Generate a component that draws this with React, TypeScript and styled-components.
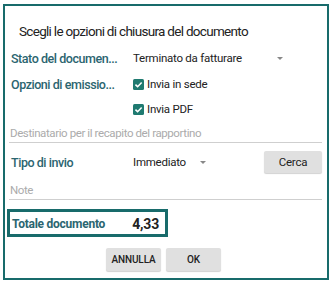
import styled, { createGlobalStyle } from 'styled-components';

const GlobalStyle = createGlobalStyle`
    html, body {
        margin: 0;
        padding: 0;
        background: #ffffff;
        font-family: Roboto, "Liberation Sans", sans-serif;
    }
`;

const teal = '#186b6b';
const labelColor = '#2b6570';

const Page = styled.div`
    width: 335px;
    height: 285px;
    padding: 4px 0 0 3px;
    box-sizing: border-box;
`;

const Dialog = styled.div`
    width: 326px;
    height: 276px;
    box-sizing: border-box;
    border: 2px solid ${teal};
    padding: 0 5px 0 4px;
    display: flex;
    flex-direction: column;
`;

const Title = styled.h2`
    margin: 0;
    padding: 17px 0 0 10px;
    height: 39px;
    box-sizing: border-box;
    font-size: 13.5px;
    font-weight: 400;
    letter-spacing: -0.7px;
    color: #222;
    line-height: 16px;
    white-space: nowrap;
`;

const Row = styled.div<{ $h: number }>`
    display: flex;
    align-items: center;
    height: ${(p) => p.$h}px;
`;

const Label = styled.div`
    width: 124px;
    flex: none;
    padding-left: 2px;
    box-sizing: border-box;
    font-size: 12.5px;
    font-weight: 500;
    letter-spacing: -0.45px;
    color: ${labelColor};
    white-space: nowrap;
`;

const Select = styled.div<{ $w: number }>`
    width: ${(p) => p.$w}px;
    display: flex;
    align-items: center;
    justify-content: space-between;
    font-size: 11.5px;
    letter-spacing: -0.25px;
    color: #222;
`;

const Caret = styled.span`
    width: 0;
    height: 0;
    border-left: 3px solid transparent;
    border-right: 3px solid transparent;
    border-top: 3px solid #888;
`;

const Check = styled.label`
    display: flex;
    align-items: center;
    gap: 3px;
    font-size: 11.5px;
    letter-spacing: -0.25px;
    color: #222;
`;

const Box = styled.span`
    width: 11px;
    height: 11px;
    border-radius: 1.5px;
    background: #1f7a70;
    display: flex;
    align-items: center;
    justify-content: center;
`;

const Field = styled.div<{ $top: number }>`
    border-bottom: 1px solid #cfcfcf;
    font-size: 11.5px;
    letter-spacing: -0.4px;
    line-height: 14px;
    color: #ababab;
    padding: ${(p) => p.$top}px 0 2px 1px;
`;

const GreyButton = styled.button<{ $w: number }>`
    width: ${(p) => p.$w}px;
    height: 22px;
    border: none;
    border-radius: 2px;
    background: #e0e0e0;
    box-shadow: 0 1px 1px rgba(0, 0, 0, 0.18);
    font-family: inherit;
    font-size: 11.5px;
    letter-spacing: -0.2px;
    color: #222;
    padding: 0;
`;

const Spacer = styled.div`
    flex: 1;
`;

const Total = styled.div`
    margin: 9px 0 0 -2px;
    width: 161px;
    height: 28px;
    box-sizing: border-box;
    border: 3px solid ${teal};
    display: flex;
    align-items: center;
    justify-content: space-between;
    padding: 1px 6px 0 2px;
`;

const TotalLabel = styled.span`
    font-size: 12px;
    font-weight: 700;
    letter-spacing: -0.25px;
    color: ${labelColor};
`;

const TotalValue = styled.span`
    font-size: 14px;
    font-weight: 700;
    letter-spacing: -0.2px;
    color: #222;
`;

const Actions = styled.div`
    display: flex;
    justify-content: center;
    gap: 5px;
    margin-top: 11px;
    padding-right: 4px;
`;

const ActionButton = styled(GreyButton)`
    font-size: 10px;
    font-weight: 500;
    letter-spacing: -0.1px;
    height: 23px;
`;

function Tick() {
    return (
        <svg width="9" height="9" viewBox="0 0 10 10">
            <path d="M1.6 5.1 L4 7.4 L8.5 2.7" fill="none" stroke="#fff" strokeWidth="1.7" />
        </svg>
    );
}

export default function App() {
    return (
        <Page>
            <GlobalStyle />
            <Dialog>
                <Title>Scegli le opzioni di chiusura del documento</Title>
                <Row $h={26}>
                    <Label>Stato del documen...</Label>
                    <Select $w={150}>
                        <span>Terminato da fatturare</span>
                        <Caret />
                    </Select>
                </Row>
                <Row $h={26}>
                    <Label>Opzioni di emissio...</Label>
                    <Check><Box><Tick /></Box>Invia in sede</Check>
                </Row>
                <Row $h={24}>
                    <Label />
                    <Check><Box><Tick /></Box>Invia PDF</Check>
                </Row>
                <Field $top={5}>Destinatario per il recapito del rapportino</Field>
                <Row $h={38}>
                    <Label>Tipo di invio</Label>
                    <Select $w={73}>
                        <span>Immediato</span>
                        <Caret />
                    </Select>
                    <Spacer />
                    <GreyButton $w={58}>Cerca</GreyButton>
                </Row>
                <Field $top={2}>Note</Field>
                <Total>
                    <TotalLabel>Totale documento</TotalLabel>
                    <TotalValue>4,33</TotalValue>
                </Total>
                <Actions>
                    <ActionButton $w={55}>ANNULLA</ActionButton>
                    <ActionButton $w={55}>OK</ActionButton>
                </Actions>
            </Dialog>
        </Page>
    );
}
